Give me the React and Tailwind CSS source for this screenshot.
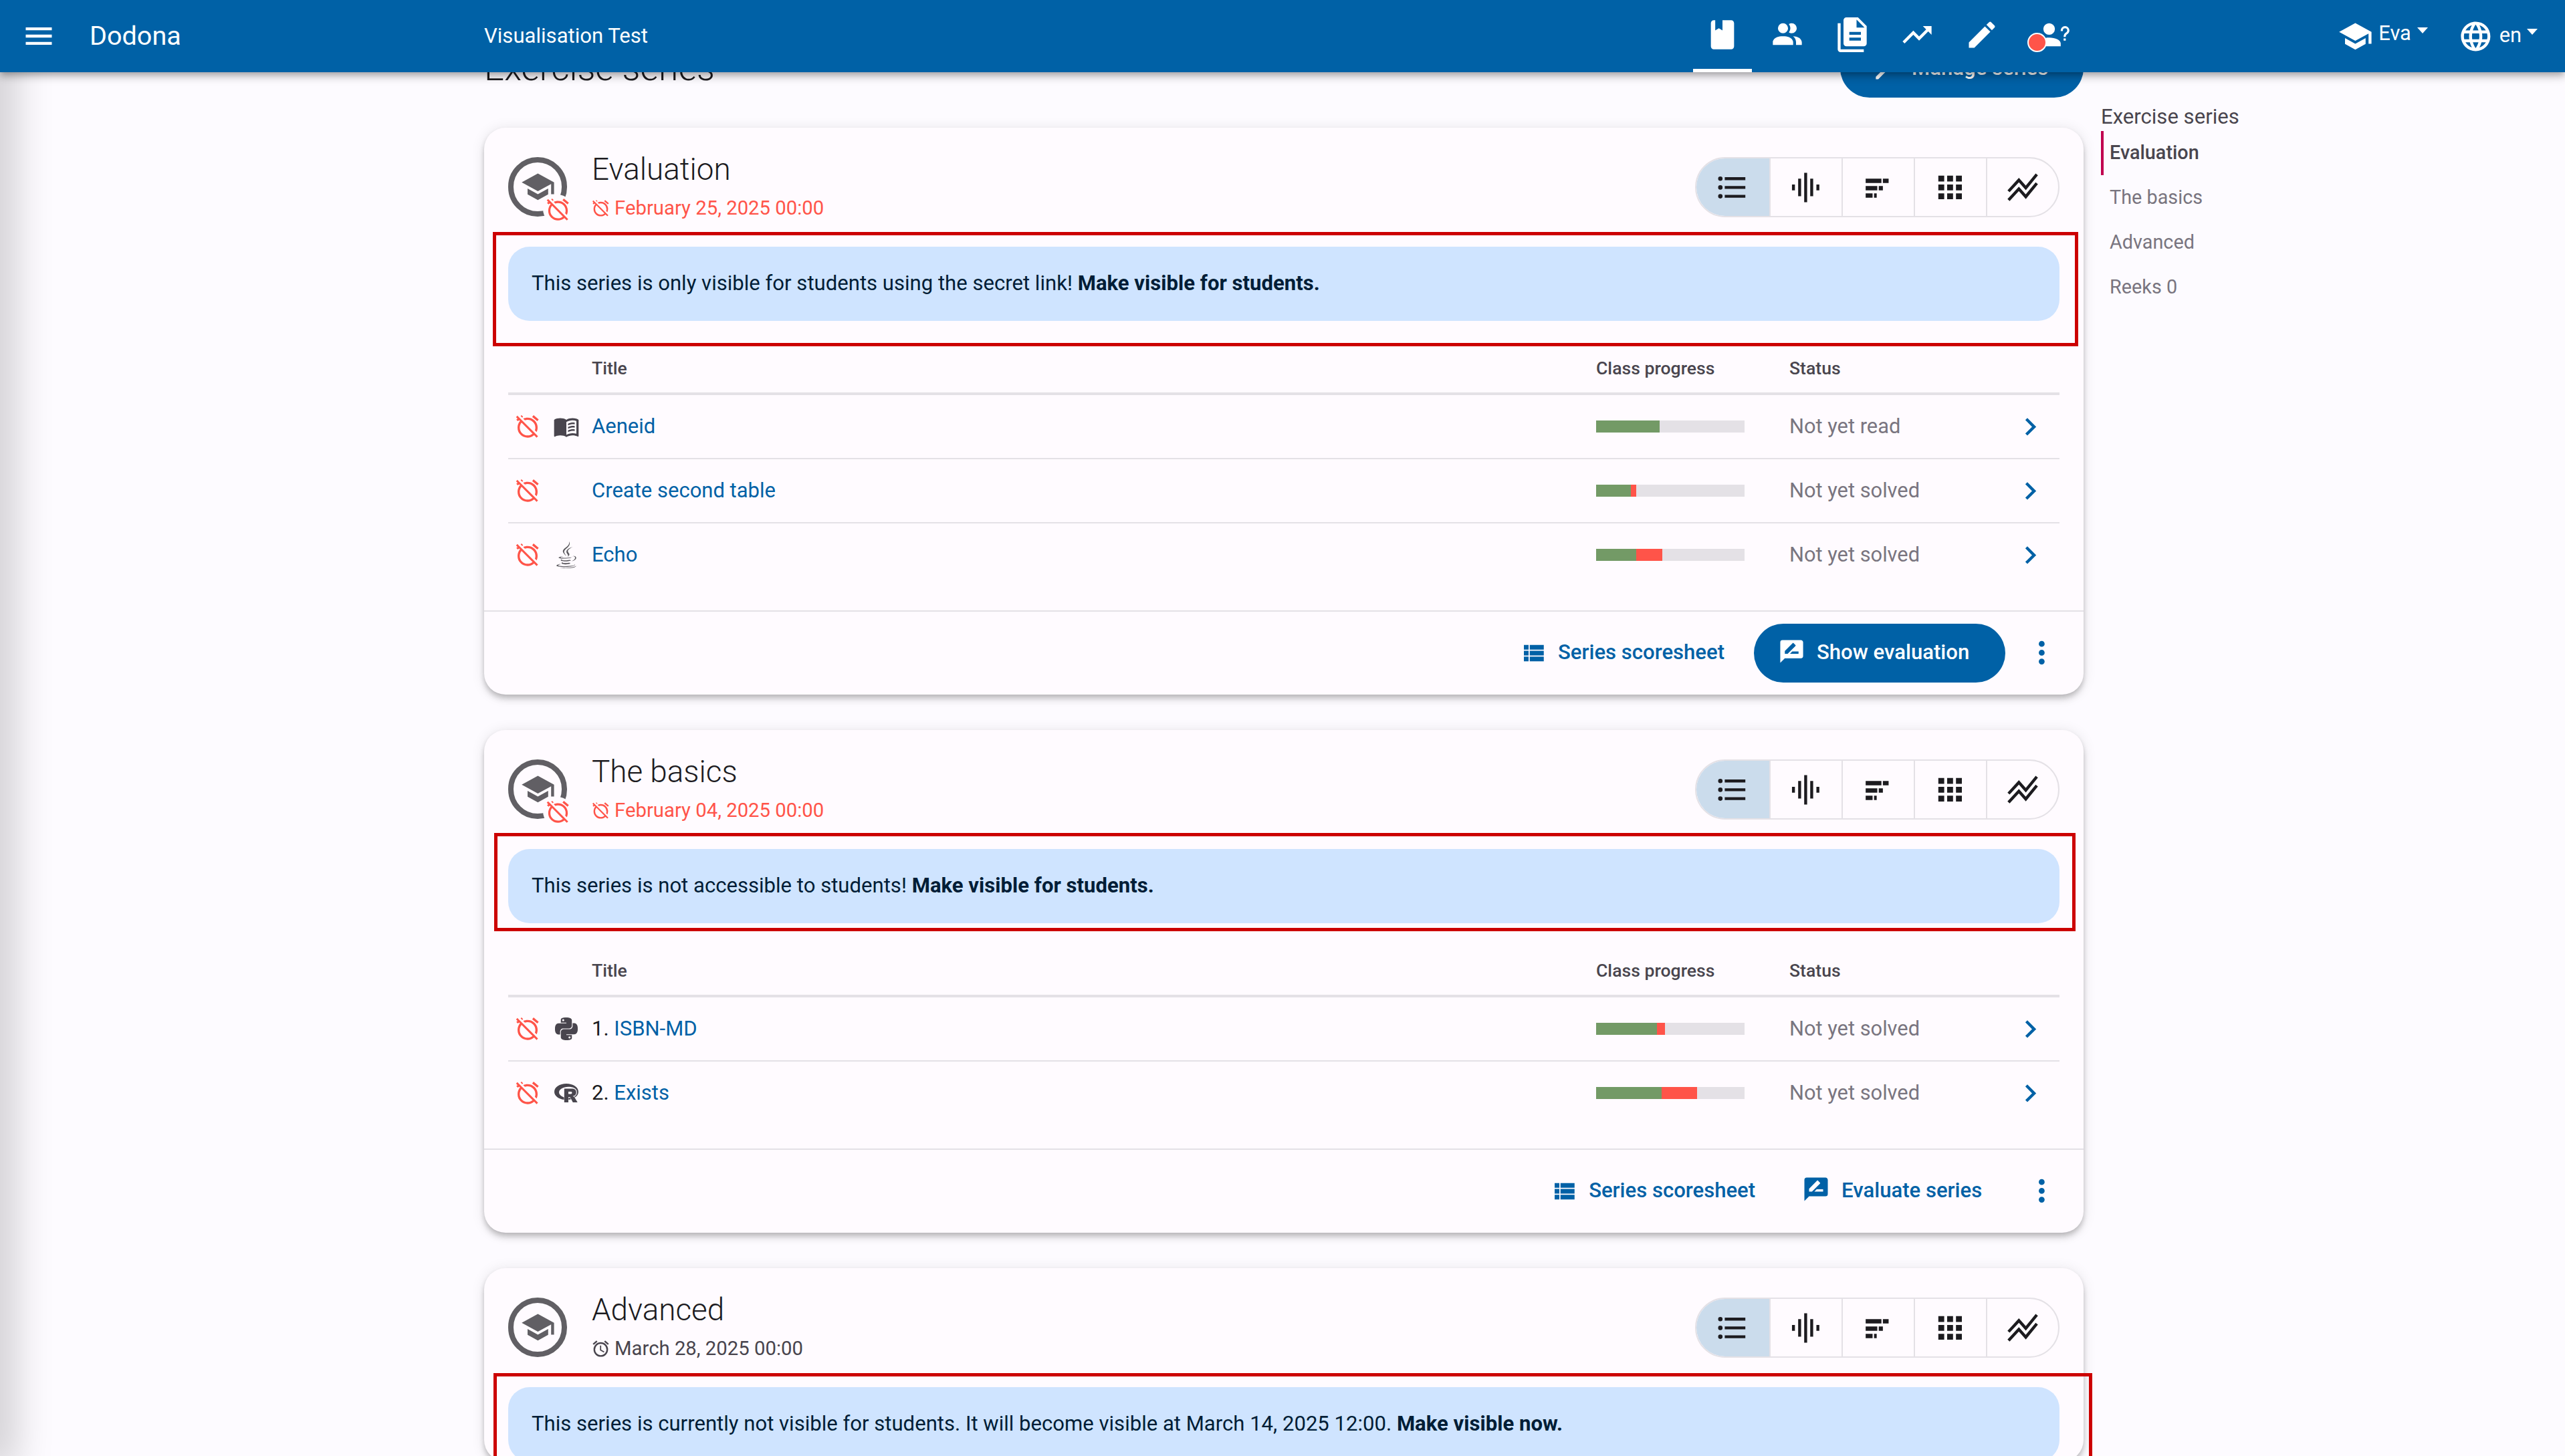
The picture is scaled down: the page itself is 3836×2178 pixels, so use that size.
import { FaJava } from "react-icons/fa";
import { SiPython, SiR } from "react-icons/si";

const P = {
  menu: "M3,6H21V8H3V6M3,11H21V13H3V11M3,16H21V18H3V16Z",
  book: "M18,22A2,2 0 0,0 20,20V4C20,2.89 19.1,2 18,2H12V9L9.5,7.5L7,9V2H6A2,2 0 0,0 4,4V20A2,2 0 0,0 6,22H18Z",
  people: "M16 17V19H2V17S2 13 9 13 16 17 16 17M12.5 7.5A3.5 3.5 0 1 0 9 11A3.5 3.5 0 0 0 12.5 7.5M15.94 13A5.32 5.32 0 0 1 18 17V19H22V17S22 13.37 15.94 13M15 4A3.39 3.39 0 0 0 13.07 4.59A5 5 0 0 1 13.07 10.41A3.39 3.39 0 0 0 15 11A3.5 3.5 0 0 0 15 4Z",
  files: "M16 0H8C6.9 0 6 .9 6 2V18C6 19.1 6.9 20 8 20H20C21.1 20 22 19.1 22 18V6L16 0M18 16H10V14H18V16M18 12H10V10H18V12M15 7V1.5L20.5 7H15M4 4V22H20V24H4C2.9 24 2 23.1 2 22V4H4Z",
  trend: "M16,6L18.29,8.29L13.41,13.17L9.41,9.17L2,16.59L3.41,18L9.41,12L13.41,16L19.71,9.71L22,12V6H16Z",
  pencil: "M20.71,7.04C21.1,6.65 21.1,6 20.71,5.63L18.37,3.29C18,2.9 17.35,2.9 16.96,3.29L15.12,5.12L18.87,8.87M3,17.25V21H6.75L17.81,9.93L14.06,6.18L3,17.25Z",
  accountQ: "M13,8A4,4 0 0,1 9,12A4,4 0 0,1 5,8A4,4 0 0,1 9,4A4,4 0 0,1 13,8M17,18V20H1V18C1,15.79 4.58,14 9,14C13.42,14 17,15.79 17,18M20.5,14.5V16H19V14.5H20.5M18.5,9.5H17V9A3,3 0 0,1 20,6A3,3 0 0,1 23,9C23,9.97 22.5,10.88 21.71,11.41L21.41,11.6C20.84,12 20.5,12.61 20.5,13.23V13.5H19V13.23C19,12.11 19.56,11.07 20.5,10.5L20.79,10.3C21.26,10 21.5,9.5 21.5,9A1.5,1.5 0 0,0 20,7.5A1.5,1.5 0 0,0 18.5,9V9.5Z",
  school: "M12,3L1,9L12,15L21,10.09V17H23V9M5,13.18V17.18L12,21L19,17.18V13.18L12,17L5,13.18Z",
  web: "M16.36,14C16.44,13.34 16.5,12.68 16.5,12C16.5,11.32 16.44,10.66 16.36,10H19.74C19.9,10.64 20,11.31 20,12C20,12.69 19.9,13.36 19.74,14M14.59,19.56C15.19,18.45 15.65,17.25 15.97,16H18.92C17.96,17.65 16.43,18.93 14.59,19.56M14.34,14H9.66C9.56,13.34 9.5,12.68 9.5,12C9.5,11.32 9.56,10.65 9.66,10H14.34C14.43,10.65 14.5,11.32 14.5,12C14.5,12.68 14.43,13.34 14.34,14M12,19.96C11.17,18.76 10.5,17.43 10.09,16H13.91C13.5,17.43 12.83,18.76 12,19.96M8,8H5.08C6.03,6.34 7.57,5.06 9.4,4.44C8.8,5.55 8.35,6.75 8,8M5.08,16H8C8.35,17.25 8.8,18.45 9.4,19.56C7.57,18.93 6.03,17.65 5.08,16M4.26,14C4.1,13.36 4,12.69 4,12C4,11.31 4.1,10.64 4.26,10H7.64C7.56,10.66 7.5,11.32 7.5,12C7.5,12.68 7.56,13.34 7.64,14M12,4.03C12.83,5.23 13.5,6.57 13.91,8H10.09C10.5,6.57 11.17,5.23 12,4.03M18.92,8H15.97C15.65,6.75 15.19,5.55 14.59,4.44C16.43,5.07 17.96,6.34 18.92,8M12,2C6.47,2 2,6.5 2,12A10,10 0 0,0 12,22A10,10 0 0,0 22,12A10,10 0 0,0 12,2Z",
  alarmOff: "M8,3.28L6.6,1.86L5.74,2.57L7.16,4M16.47,18.39C15.26,19.39 13.7,20 12,20A7,7 0 0,1 5,13C5,11.3 5.61,9.74 6.61,8.53M2.92,2.29L1.65,3.57L3,4.9L1.87,5.83L3.29,7.25L4.4,6.31L5.2,7.11C3.83,8.69 3,10.75 3,13A9,9 0 0,0 12,22C14.25,22 16.31,21.17 17.89,19.8L20.09,22L21.36,20.73L3.89,3.27L2.92,2.29M22,5.72L17.4,1.86L16.11,3.39L20.71,7.25L22,5.72M12,6A7,7 0 0,1 19,13C19,13.84 18.84,14.65 18.57,15.4L20.09,16.92C20.67,15.73 21,14.41 21,13A9,9 0 0,0 12,4C10.59,4 9.27,4.33 8.08,4.91L9.6,6.43C10.35,6.16 11.16,6 12,6Z",
  alarm: "M12,20A7,7 0 0,1 5,13A7,7 0 0,1 12,6A7,7 0 0,1 19,13A7,7 0 0,1 12,20M12,4A9,9 0 0,0 3,13A9,9 0 0,0 12,22A9,9 0 0,0 21,13A9,9 0 0,0 12,4M12.5,8H11V14L15.75,16.85L16.5,15.62L12.5,13.25V8M7.88,3.39L6.6,1.86L2,5.71L3.28,7.24L7.88,3.39M22,5.72L17.4,1.86L16.11,3.39L20.71,7.25L22,5.72Z",
  list: "M7,5H21V7H7V5M7,13V11H21V13H7M4,4.5A1.5,1.5 0 0,1 5.5,6A1.5,1.5 0 0,1 4,7.5A1.5,1.5 0 0,1 2.5,6A1.5,1.5 0 0,1 4,4.5M4,10.5A1.5,1.5 0 0,1 5.5,12A1.5,1.5 0 0,1 4,13.5A1.5,1.5 0 0,1 2.5,12A1.5,1.5 0 0,1 4,10.5M7,19V17H21V19H7M4,16.5A1.5,1.5 0 0,1 5.5,18A1.5,1.5 0 0,1 4,19.5A1.5,1.5 0 0,1 2.5,18A1.5,1.5 0 0,1 4,16.5Z",
  wave: "M2.7,10H4.7V14H2.7ZM6.9,6H8.9V18H6.9ZM11,2H13V22H11ZM15.1,6H17.1V18H15.1ZM19.3,10H21.3V14H19.3Z",
  bars: "M3.7,6H14.4V9H3.7ZM15.4,6H19.3V9H15.4ZM3.7,11H11.6V14H3.7ZM12.6,11H15.4V14H12.6ZM3.7,16H8.4V19H3.7ZM9.4,16H11.2V19H9.4Z",
  grid: "M4,4H8V8H4ZM10,4H14V8H10ZM16,4H20V8H16ZM4,10H8V14H4ZM10,10H14V14H10ZM16,10H20V14H16ZM4,16H8V20H4ZM10,16H14V20H10ZM16,16H20V20H16Z",
  chevron: "M8.59,16.58L13.17,12L8.59,7.41L10,6L16,12L10,18L8.59,16.58Z",
  dots: "M12,16A2,2 0 0,1 14,18A2,2 0 0,1 12,20A2,2 0 0,1 10,18A2,2 0 0,1 12,16M12,10A2,2 0 0,1 14,12A2,2 0 0,1 12,14A2,2 0 0,1 10,12A2,2 0 0,1 12,10M12,4A2,2 0 0,1 14,6A2,2 0 0,1 12,8A2,2 0 0,1 10,6A2,2 0 0,1 12,4Z",
  viewList: "M9,5V9H21V5M9,19H21V15H9M9,14H21V10H9M4,9H8V5H4M4,19H8V15H4M4,14H8V10H4V14Z",
  messageDraw: "M18,14H10.5L12.5,12H18M6,14V11.5L12.88,4.64C13.07,4.45 13.39,4.45 13.59,4.64L15.35,6.41C15.55,6.61 15.55,6.92 15.35,7.12L8.47,14M20,2H4A2,2 0 0,0 2,4V22L6,18H20A2,2 0 0,0 22,16V4C22,2.89 21.1,2 20,2Z",
  bookOpen: "M21,5C19.89,4.65 18.67,4.5 17.5,4.5C15.55,4.5 13.45,4.9 12,6C10.55,4.9 8.45,4.5 6.5,4.5C4.55,4.5 2.45,4.9 1,6V20.65C1,20.9 1.25,21.15 1.5,21.15C1.6,21.15 1.65,21.1 1.75,21.1C3.1,20.45 5.05,20 6.5,20C8.45,20 10.55,20.4 12,21.5C13.35,20.65 15.8,20 17.5,20C19.15,20 20.85,20.3 22.25,21.05C22.35,21.1 22.4,21.1 22.5,21.1C22.75,21.1 23,20.85 23,20.6V6C22.4,5.55 21.75,5.25 21,5M21,18.5C19.9,18.15 18.7,18 17.5,18C15.8,18 13.35,18.65 12,19.5V8C13.35,7.15 15.8,6.5 17.5,6.5C18.7,6.5 19.9,6.65 21,7V18.5ZM13.5,9.5C15.3,8.6 17.5,8.2 19.5,8.5V10C17.5,9.7 15.3,10.1 13.5,11ZM13.5,12.5C15.3,11.6 17.5,11.2 19.5,11.5V13C17.5,12.7 15.3,13.1 13.5,14ZM13.5,15.5C15.3,14.6 17.5,14.2 19.5,14.5V16C17.5,15.7 15.3,16.1 13.5,17Z",
  playlistEdit: "M2,6H14V8H2ZM2,10H11V12H2ZM19.5,9.5L21.5,11.5L12,21H10V19Z",
};

function Icon({ d, className }) {
  return (
    <svg viewBox="0 0 24 24" fill="currentColor" className={className}>
      <path d={d} />
    </svg>
  );
}

function Caret() {
  return <span className="w-0 h-0 border-x-[8px] border-x-transparent border-t-[9px] border-t-white" />;
}

function NavBar() {
  const tabs = [P.people, P.files, P.trend, P.pencil];
  return (
    <header className="relative z-10 h-[108px] shrink-0 bg-[#0061a6] text-white flex items-center shadow-[0_4px_8px_-2px_rgba(0,0,0,0.2),0_8px_10px_0_rgba(0,0,0,0.14),0_2px_20px_0_rgba(0,0,0,0.12)]">
      <div className="w-[724px] shrink-0 flex items-center">
        <Icon d={P.menu} className="w-[52px] h-[52px] ml-[32px]" />
        <span className="ml-[50px] text-[39.6px] leading-none font-normal">Dodona</span>
      </div>
      <div className="w-[1803px] shrink-0 text-[31.1px]">Visualisation Test</div>
      <nav className="flex h-full">
        <div className="relative w-[97px] flex items-center justify-center">
          <Icon d={P.book} className="w-[52px] h-[52px] -mt-[4px]" />
          <span className="absolute bottom-0 left-[5px] w-[88px] h-[5px] bg-white" />
        </div>
        {tabs.map((d) => (
          <div key={d} className="w-[97px] flex items-center justify-center">
            <Icon d={d} className="w-[52px] h-[52px] -mt-[4px]" />
          </div>
        ))}
        <div className="relative w-[97px] flex items-center justify-center">
          <Icon d={P.accountQ} className="w-[52px] h-[52px] -mt-[4px] ml-[20px]" />
          <span className="absolute left-[20px] top-[49px] w-[29px] h-[29px] rounded-full bg-[#ff5449] border-2 border-white" />
        </div>
      </nav>
      <div className="ml-auto flex items-center pr-[41px]">
        <Icon d={P.school} className="w-[52.8px] h-[52.8px]" />
        <span className="ml-[9px] text-[30.8px] -mt-[8px]">Eva</span>
        <span className="ml-[9px] -mt-[16px] flex"><Caret /></span>
        <Icon d={P.web} className="w-[52.8px] h-[52.8px] ml-[45px]" />
        <span className="ml-[9px] text-[30.8px] -mt-[2px]">en</span>
        <span className="ml-[8px] -mt-[12px] flex"><Caret /></span>
      </div>
    </header>
  );
}

function ViewSwitch() {
  const btn = "w-[108px] flex items-center justify-center border-l-2 border-[#e4e1e6] text-[#1c1b1f]";
  return (
    <div className="ml-auto flex h-[90px] rounded-full border-2 border-[#e4e1e6] overflow-hidden">
      <div className="w-[109px] flex items-center justify-center bg-[#cbdcec] text-[#1c1b1f]">
        <Icon d={P.list} className="w-[52.8px] h-[52.8px] -ml-[2px]" />
      </div>
      <div className={btn}><Icon d={P.wave} className="w-[52.8px] h-[52.8px] -ml-[2px]" /></div>
      <div className={btn}><Icon d={P.bars} className="w-[52.8px] h-[52.8px] -ml-[2px]" /></div>
      <div className={btn}><Icon d={P.grid} className="w-[52.8px] h-[52.8px] -ml-[2px]" /></div>
      <div className={btn}>
        <svg viewBox="0 0 24 24" fill="none" stroke="currentColor" strokeWidth="2" className="w-[52.8px] h-[52.8px]">
          <path d="M2.2,14.6L9.2,7L13.9,12.3L21.4,3.1" />
          <path d="M2.2,20.6L9.2,13L13.9,18.3L21.4,9.1" />
        </svg>
      </div>
    </div>
  );
}

function Progress({ green, red }) {
  return (
    <div className="w-[222px] h-[18px] bg-[#e4e1e6] flex">
      <div className="h-full bg-[#739a66]" style={{ width: green }} />
      <div className="h-full bg-[#ff5449]" style={{ width: red }} />
    </div>
  );
}

const rowGrid = "grid grid-cols-[125px_1502px_289px_332px_72px] items-center";

function TypeIcon({ type }) {
  if (type === "book") return <Icon d={P.bookOpen} className="w-[42px] h-[42px] text-[#49454e]" />;
  if (type === "java") return <FaJava className="w-[36px] h-[40px] text-[#5c5a5f]" />;
  if (type === "python") return <SiPython className="w-[34px] h-[34px] text-[#49454e]" />;
  if (type === "r") return <SiR className="w-[36px] h-[36px] text-[#49454e]" />;
  return null;
}

function ActivityRow({ row, last }) {
  return (
    <div className={`${rowGrid} h-[96px] ${last ? "pb-[2px]" : "border-b-2 border-[#e4e1e6]"}`}>
      <div className="flex items-center pl-[9px]">
        <Icon d={P.alarmOff} className="w-[40px] h-[40px] text-[#ff5449]" />
        <div className="w-[40px] ml-[18px] flex justify-center"><TypeIcon type={row.type} /></div>
      </div>
      <div className="text-[31px]">
        {row.num && <span className="text-[#1c1b1f]">{row.num} </span>}
        <span className="text-[#0061a6]">{row.title}</span>
      </div>
      <Progress green={row.green} red={row.red} />
      <div className="text-[30.8px] text-[#79757f]">{row.status}</div>
      <Icon d={P.chevron} className="w-[52.8px] h-[52.8px] text-[#0061a6] ml-[2px]" />
    </div>
  );
}

function SeriesCard({ series }) {
  const dateColor = series.closed ? "text-[#ff5449]" : "text-[#49454e]";
  return (
    <section className="relative w-[2392px] rounded-[32px] bg-[#fffbff] shadow-[0_4px_8px_-2px_rgba(0,0,0,0.2),0_8px_10px_0_rgba(0,0,0,0.1),0_2px_20px_0_rgba(0,0,0,0.1)]">
      <div className="px-[36px] pt-[44px]">
        <div className="flex items-start">
          <div className="relative w-[88px] h-[89px] rounded-full border-[8px] border-[#615f64] text-[#615f64] flex items-center justify-center shrink-0">
            <Icon d={P.school} className="w-[52.8px] h-[52.8px]" />
            {series.closed && (
              <span className="absolute left-[44px] top-[48px] w-[44px] h-[44px] rounded-full bg-[#fffbff] flex items-center justify-center">
                <Icon d={P.alarmOff} className="w-[39px] h-[39px] text-[#ff5449]" />
              </span>
            )}
          </div>
          <div className="ml-[37px] h-[89px]">
            <div className="text-[45.8px] leading-[52px] font-light text-[#1c1b1f] -mt-[7px]">{series.name}</div>
            <div className={`flex items-center mt-[10px] text-[29.3px] leading-[42px] ${dateColor}`}>
              <Icon d={series.closed ? P.alarmOff : P.alarm} className="w-[29px] h-[29px] mr-[6px] -ml-[1px]" />
              {series.date}
            </div>
          </div>
          <ViewSwitch />
        </div>
        <div className="mt-[44px] h-[111px] rounded-[32px] bg-[#cfe4ff] text-[#001d36] text-[31.1px] flex items-center px-[35px]">
          <span>{series.alert} <strong className="font-bold">{series.action}</strong></span>
        </div>
        {series.rows && (
          <>
            <div className={`${rowGrid} mt-[40px] h-[71px] pb-[6px] border-b-4 border-[#e4e1e6] text-[26.6px] font-medium text-[#49454e]`}>
              <div />
              <div>Title</div>
              <div>Class progress</div>
              <div>Status</div>
              <div />
            </div>
            {series.rows.map((row, i) => (
              <ActivityRow key={row.title} row={row} last={i === series.rows.length - 1} />
            ))}
          </>
        )}
      </div>
      {series.rows && (
        <div className="mt-[34px] h-[126px] pb-[1px] border-t-2 border-[#e4e1e6] flex items-center justify-end pr-[36px] text-[31.1px] font-medium text-[#0061a6]">
          <Icon d={P.viewList} className="w-[42px] h-[42px]" />
          <span className="ml-[16px]">Series scoresheet</span>
          {series.primary ? (
            <span className="ml-[44px] h-[88px] pl-[36px] pr-[54px] rounded-full bg-[#0061a6] text-white flex items-center mr-[28px]">
              <Icon d={P.messageDraw} className="w-[41px] h-[41px] -mt-[4px]" />
              <span className="ml-[17px]">Show evaluation</span>
            </span>
          ) : (
            <span className="ml-[70px] flex items-center mr-[63px]">
              <Icon d={P.messageDraw} className="w-[42px] h-[42px] -mt-[4px]" />
              <span className="ml-[17px]">Evaluate series</span>
            </span>
          )}
          <Icon d={P.dots} className="w-[52.8px] h-[52.8px]" />
        </div>
      )}
      <div className={series.boxClass} />
    </section>
  );
}

const SERIES = [
  {
    name: "Evaluation",
    closed: true,
    date: "February 25, 2025 00:00",
    alert: "This series is only visible for students using the secret link!",
    action: "Make visible for students.",
    primary: true,
    boxClass: "absolute left-[13px] top-[156px] w-[2371px] h-[171px] border-[5px] border-[#cc0000]",
    rows: [
      { type: "book", title: "Aeneid", green: 95, red: 0, status: "Not yet read" },
      { type: null, title: "Create second table", green: 52, red: 8, status: "Not yet solved" },
      { type: "java", title: "Echo", green: 60, red: 39, status: "Not yet solved" },
    ],
  },
  {
    name: "The basics",
    closed: true,
    date: "February 04, 2025 00:00",
    alert: "This series is not accessible to students!",
    action: "Make visible for students.",
    boxClass: "absolute left-[15px] top-[154px] w-[2365px] h-[147px] border-[5px] border-[#cc0000]",
    rows: [
      { type: "python", num: "1.", title: "ISBN-MD", green: 91, red: 12, status: "Not yet solved" },
      { type: "r", num: "2.", title: "Exists", green: 98, red: 53, status: "Not yet solved" },
    ],
  },
  {
    name: "Advanced",
    closed: false,
    date: "March 28, 2025 00:00",
    alert: "This series is currently not visible for students. It will become visible at March 14, 2025 12:00.",
    action: "Make visible now.",
    boxClass: "absolute left-[14px] top-[157px] w-[2391px] h-[400px] border-[5px] border-[#cc0000]",
  },
];

function Toc() {
  const items = ["The basics", "Advanced", "Reeks 0"];
  return (
    <aside className="ml-[26px] pt-[96px] w-[500px] font-normal">
      <div className="text-[31.1px] leading-[42px] text-[#49454e]">Exercise series</div>
      <div className="h-[66px] border-l-4 border-[#c0004f] pl-[9px] flex items-center text-[28.8px] font-medium text-[#49454e]">Evaluation</div>
      {items.map((t) => (
        <div key={t} className="h-[67px] pl-[13px] flex items-center text-[28.8px] text-[#79757f]">{t}</div>
      ))}
    </aside>
  );
}

export default function App() {
  return (
    <div className="relative w-[3836px] h-[2178px] overflow-hidden bg-[#fdfbff] flex flex-col font-['Roboto',sans-serif]">
      <div className="absolute -left-[20px] top-0 w-[20px] h-full shadow-[0_0_60px_20px_rgba(0,0,0,0.2)]" />
      <NavBar />
      <main className="flex -mt-[50px] pl-[724px]">
        <div className="w-[2392px] shrink-0">
          <div className="h-[88px] mb-[45px] flex items-center justify-between">
            <h1 className="text-[53px] font-light text-[#1c1b1f] leading-none">Exercise series</h1>
            <span className="w-[364px] h-[88px] pl-[35px] rounded-full bg-[#0061a6] text-white text-[31.1px] font-medium flex items-center">
              <Icon d={P.playlistEdit} className="w-[44px] h-[44px] mr-[28px]" />
              Manage series
            </span>
          </div>
          <div className="flex flex-col gap-[53px]">
            {SERIES.map((s) => (
              <SeriesCard key={s.name} series={s} />
            ))}
          </div>
        </div>
        <Toc />
      </main>
    </div>
  );
}
